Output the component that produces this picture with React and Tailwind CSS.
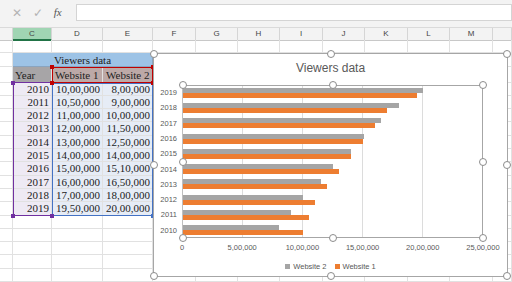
import React from "react";

const cols = ["", "C", "D", "E", "F", "G", "H", "I", "J", "K", "L", "M", ""];

const data = [
  { year: 2010, w1: 1000000, w2: 800000, s1: "10,00,000", s2: "8,00,000" },
  { year: 2011, w1: 1050000, w2: 900000, s1: "10,50,000", s2: "9,00,000" },
  { year: 2012, w1: 1100000, w2: 1000000, s1: "11,00,000", s2: "10,00,000" },
  { year: 2013, w1: 1200000, w2: 1150000, s1: "12,00,000", s2: "11,50,000" },
  { year: 2014, w1: 1300000, w2: 1250000, s1: "13,00,000", s2: "12,50,000" },
  { year: 2015, w1: 1400000, w2: 1400000, s1: "14,00,000", s2: "14,00,000" },
  { year: 2016, w1: 1500000, w2: 1510000, s1: "15,00,000", s2: "15,10,000" },
  { year: 2017, w1: 1600000, w2: 1650000, s1: "16,00,000", s2: "16,50,000" },
  { year: 2018, w1: 1700000, w2: 1800000, s1: "17,00,000", s2: "18,00,000" },
  { year: 2019, w1: 1950000, w2: 2000000, s1: "19,50,000", s2: "20,00,000" },
];

const MAX = 2500000;
const ticks = ["0", "5,00,000", "10,00,000", "15,00,000", "20,00,000", "25,00,000"];

const Dot = () => (
  <div className="w-[8px] h-[8px] -m-[4px] rounded-full bg-white border border-[#8c8c8c] shrink-0" />
);

// selection handles laid over an object: corners and edge midpoints
const Handles = () => (
  <div className="absolute inset-0 pointer-events-none flex flex-col justify-between">
    <div className="flex justify-between">
      <Dot />
      <Dot />
      <Dot />
    </div>
    <div className="flex justify-between">
      <Dot />
      <Dot />
    </div>
    <div className="flex justify-between">
      <Dot />
      <Dot />
      <Dot />
    </div>
  </div>
);

const Cell = ({ className = "", children }) => (
  <div className={`border-r border-b border-[#e1e1e1] overflow-hidden whitespace-nowrap ${className}`}>
    {children}
  </div>
);

const Chart = () => {
  const rev = [...data].reverse();
  return (
    <div className="absolute left-[153px] top-[53px] w-[355px] h-[224px] bg-white border border-[#a6a6a6] flex flex-col font-['Liberation_Sans',sans-serif] text-[#595959]">
      <div className="text-center text-[12px] mt-[7px] leading-[14px]">Viewers data</div>

      <div className="flex mt-[10px]">
        <div className="w-[28px] flex flex-col pr-[5px]">
          {rev.map((d) => (
            <div key={d.year} className="flex-1 flex items-center justify-end text-[7.5px]">
              {d.year}
            </div>
          ))}
        </div>
        <div className="relative w-[301px] h-[153px] border-l border-[#bfbfbf]">
          <div className="absolute inset-0 flex">
            {[0, 1, 2, 3, 4].map((i) => (
              <div key={i} className="flex-1 border-r border-[#dcdcdc]" />
            ))}
          </div>
          <div className="relative h-full flex flex-col">
            {rev.map((d) => (
              <div key={d.year} className="flex-1 flex flex-col justify-center">
                <div className="h-[5px] bg-[#a5a5a5]" style={{ width: `${(d.w2 / MAX) * 100}%` }} />
                <div className="h-[5px] bg-[#ed7d31]" style={{ width: `${(d.w1 / MAX) * 100}%` }} />
              </div>
            ))}
          </div>
          <div className="absolute inset-0 border-t border-r border-b border-[#a6a6a6]" />
          <Handles />
        </div>
      </div>

      <div className="ml-[28px] w-[301px] flex justify-between mt-[5px] text-[7.5px] leading-[9px]">
        {ticks.map((t) => (
          <div key={t} className="w-0 flex justify-center whitespace-nowrap">
            {t}
          </div>
        ))}
      </div>

      <div className="flex justify-center gap-[8px] mt-[10px] text-[7.5px] leading-[9px]">
        <div className="flex items-center gap-[3px]">
          <div className="w-[5px] h-[5px] bg-[#a5a5a5]" />
          Website 2
        </div>
        <div className="flex items-center gap-[3px]">
          <div className="w-[5px] h-[5px] bg-[#ed7d31]" />
          Website 1
        </div>
      </div>

      <Handles />
    </div>
  );
};

const Corner = ({ color }) => <div className={`w-[4px] h-[4px] -m-[2px] ${color}`} />;

const Range = ({ className, color, corners = [true, true, true, true] }) => (
  <div className={`absolute flex flex-col justify-between ${className}`}>
    <div className="flex justify-between">
      {corners[0] ? <Corner color={color} /> : <span />}
      {corners[1] ? <Corner color={color} /> : <span />}
    </div>
    <div className="flex justify-between">
      {corners[2] ? <Corner color={color} /> : <span />}
      {corners[3] ? <Corner color={color} /> : <span />}
    </div>
  </div>
);

export default function App() {
  const emptyRow = (key) => cols.map((_, i) => <Cell key={`${key}-${i}`} />);
  const txt = "text-[11px] text-[#222]";

  const rows = [];
  rows.push(...emptyRow("r0"));

  rows.push(<Cell key="v0" />);
  rows.push(
    <div
      key="v1"
      className={`col-span-3 bg-[#9dc3e6] border-r border-b border-[#8aa4bf] text-center leading-[14px] ${txt}`}
    >
      Viewers data
    </div>
  );
  for (let i = 4; i < cols.length; i++) rows.push(<Cell key={`v${i}`} />);

  rows.push(<Cell key="h0" />);
  rows.push(
    <Cell key="h1" className={`bg-[#a7a5a7] border-[#8e8e8e] pl-[2px] leading-[16px] ${txt}`}>
      Year
    </Cell>
  );
  rows.push(
    <Cell key="h2" className={`bg-[#bda9a7] border-[#8e8e8e] pl-[3px] leading-[16px] ${txt}`}>
      Website 1
    </Cell>
  );
  rows.push(
    <Cell key="h3" className={`bg-[#bda9a7] border-[#8e8e8e] pl-[3px] leading-[16px] ${txt}`}>
      Website 2
    </Cell>
  );
  for (let i = 4; i < cols.length; i++) rows.push(<Cell key={`h${i}`} />);

  data.forEach((d) => {
    rows.push(<Cell key={`d${d.year}-0`} />);
    rows.push(
      <Cell key={`d${d.year}-1`} className={`bg-[#eeeaf4] border-[#a8a8b4] text-right pr-[2px] leading-[13px] ${txt}`}>
        {d.year}
      </Cell>
    );
    rows.push(
      <Cell key={`d${d.year}-2`} className={`bg-[#e6ecf6] border-[#a8a8b4] text-right pr-[2px] leading-[13px] ${txt}`}>
        {d.s1}
      </Cell>
    );
    rows.push(
      <Cell key={`d${d.year}-3`} className={`bg-[#e6ecf6] border-[#a8a8b4] text-right pr-[2px] leading-[13px] ${txt}`}>
        {d.s2}
      </Cell>
    );
    for (let i = 4; i < cols.length; i++) rows.push(<Cell key={`d${d.year}-${i}`} />);
  });
  for (let r = 0; r < 5; r++) rows.push(...emptyRow(`e${r}`));

  const gridCols = "grid-cols-[13px_39px_51px_50px_43px_42px_42px_43px_42px_43px_42px_43px_1fr]";

  return (
    <div className="w-[512px] h-[282px] overflow-hidden bg-white relative flex flex-col font-['Liberation_Sans',sans-serif]">
      {/* formula bar */}
      <div className="h-[28px] bg-[#f3f3f3] flex items-start pt-[4px] pl-[3px] gap-[5px] border-b border-[#dadada]">
        <div className="h-[17px] w-[68px] flex items-center justify-around px-[4px] text-[#b3b3b3]">
          <span className="text-[12px] leading-none">✕</span>
          <span className="text-[12px] leading-none">✓</span>
          <span className="text-[11px] leading-none italic text-[#555] font-['Liberation_Serif',serif]">fx</span>
        </div>
        <div className="flex-1 h-[17px] bg-white border border-[#d4d4d4]" />
      </div>

      {/* column headers */}
      <div className={`grid ${gridCols} h-[12px] bg-[#f3f3f3] text-[8px] leading-[11px] text-[#444]`}>
        {cols.map((c, i) => (
          <div
            key={i}
            className={`text-center border-r border-[#d5d5d5] ${
              c === "C" ? "bg-[#a0d5b3] border-b-2 border-b-[#217346]" : "border-b border-b-[#c8c8c8]"
            }`}
          >
            {c}
          </div>
        ))}
      </div>

      {/* cells */}
      <div className={`grid ${gridCols} grid-rows-[13px_14px_16px_repeat(15,13.3px)] font-['Liberation_Serif',serif] relative`}>
        {rows}
        {/* chart source ranges */}
        <div className="absolute left-[13px] top-[42.5px] w-[39.5px] h-[133.5px] border-[1.5px] border-[#7030a0]" />
        <div className="absolute left-[52px] top-[27px] w-[101px] h-[16px] border-[1.5px] border-[#c00000]" />
        <div className="absolute left-[52px] top-[43px] w-[101px] h-[133px] border-[1.5px] border-[#4472c4]" />
        <Range className="left-[13px] top-[43px] w-[39px] h-[133px]" color="bg-[#7030a0]" />
        <Range className="left-[52px] top-[27px] w-[101px] h-[16px]" color="bg-[#c00000]" />
        <Range
          className="left-[52px] top-[43px] w-[101px] h-[133px]"
          color="bg-[#4472c4]"
          corners={[false, false, false, true]}
        />
      </div>

      <Chart />
    </div>
  );
}
